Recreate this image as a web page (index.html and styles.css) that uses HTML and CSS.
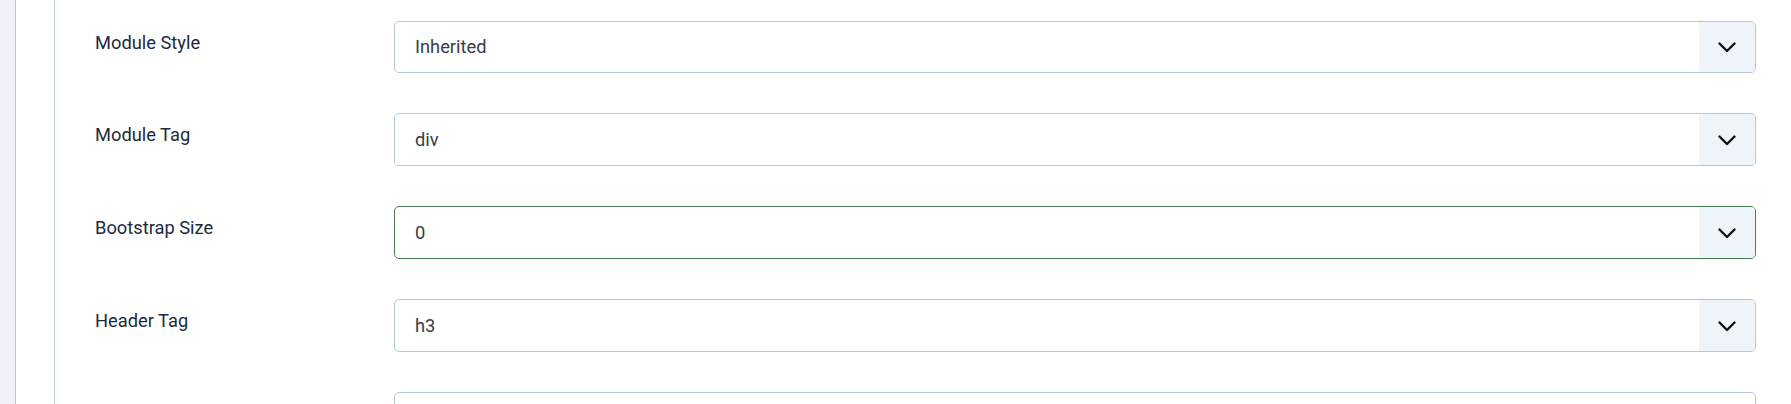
FILE: index.html
```html
<!DOCTYPE html>
<html>
  <head>
    <title>Module options</title>
    <link rel="stylesheet" href="styles.css">
  </head>
  <body>
    <div class="page">
      <div class="rail"></div>
      <div class="gutter"></div>
      <div class="fields">
        <div class="control-group">
          <div class="control-label">Module Style</div>
          <div class="form-select">
            <div class="select-value">Inherited</div>
            <div class="select-arrow">
              <svg width="18" height="11" viewBox="0 0 18 11"><path d="M1.5 1.5 L9 9 L16.5 1.5" /></svg>
            </div>
          </div>
        </div>
        <div class="control-group">
          <div class="control-label">Module Tag</div>
          <div class="form-select">
            <div class="select-value">div</div>
            <div class="select-arrow">
              <svg width="18" height="11" viewBox="0 0 18 11"><path d="M1.5 1.5 L9 9 L16.5 1.5" /></svg>
            </div>
          </div>
        </div>
        <div class="control-group">
          <div class="control-label">Bootstrap Size</div>
          <div class="form-select valid">
            <div class="select-value">0</div>
            <div class="select-arrow">
              <svg width="18" height="11" viewBox="0 0 18 11"><path d="M1.5 1.5 L9 9 L16.5 1.5" /></svg>
            </div>
          </div>
        </div>
        <div class="control-group">
          <div class="control-label">Header Tag</div>
          <div class="form-select">
            <div class="select-value">h3</div>
            <div class="select-arrow">
              <svg width="18" height="11" viewBox="0 0 18 11"><path d="M1.5 1.5 L9 9 L16.5 1.5" /></svg>
            </div>
          </div>
        </div>
        <div class="control-group">
          <div class="control-label"></div>
          <div class="form-control">&nbsp;</div>
        </div>
      </div>
    </div>
  </body>
</html>
```
FILE: styles.css
```css
body {
  font-family: "Roboto", "Liberation Sans", sans-serif;
  background-color: #fff;
  color: #22262a;
  margin: 0;
  font-size: 18.3px;
  line-height: 1.5;
  overflow: hidden;
}
.page {
  display: flex;
  min-height: 404px;
}
.rail {
  width: 15px;
  flex: none;
  background-color: #eef2f8;
  border-right: 1px solid #b9c6da;
}
.gutter {
  width: 38px;
  flex: none;
  border-right: 1px solid #c3cfe0;
}
.fields {
  flex: 1;
  display: flex;
  flex-direction: column;
  gap: 40.5px;
  padding: 20.5px 35px 0 40px;
}
.control-group {
  display: grid;
  grid-template-columns: 299px 1fr;
}
.control-label {
  padding-top: 8px;
  color: #1b2a3f;
}
.form-select,
.form-control {
  display: flex;
  border: 1px solid #b6c5da;
  border-radius: 5px;
  overflow: hidden;
  color: #363d46;
}
.form-control {
  padding: 11.5px 20px;
}
.form-select.valid {
  border-color: #457d54;
}
.select-value {
  flex: 1;
  padding: 11.5px 18px 11.5px 20px;
}
.select-arrow {
  width: 56px;
  flex: none;
  display: flex;
  align-items: center;
  justify-content: center;
  padding-top: 2px;
  background-color: #eff4fb;
}
.select-arrow path {
  fill: none;
  stroke: #111;
  stroke-width: 2.4;
  stroke-linecap: round;
  stroke-linejoin: round;
}
```
